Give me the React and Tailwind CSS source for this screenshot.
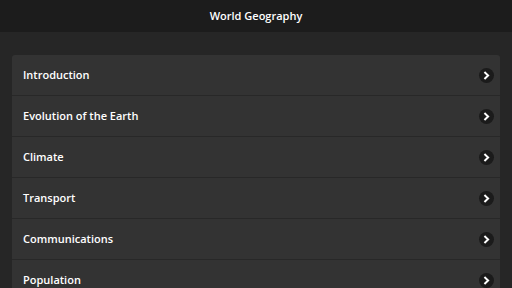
const topics = [
  "Introduction",
  "Evolution of the Earth",
  "Climate",
  "Transport",
  "Communications",
  "Population",
];

const Chevron = () => (
  <span className="flex h-[15px] w-[15px] items-center justify-center rounded-full bg-[#1b1b1b]">
    <svg width="9" height="9" viewBox="0 0 10 10">
      <path
        d="M3.5 1.8 L6.8 5 L3.5 8.2"
        fill="none"
        stroke="#ffffff"
        strokeWidth="2.2"
        strokeLinecap="square"
      />
    </svg>
  </span>
);

const App = () => {
  return (
    <div
      className="h-[288px] w-[512px] overflow-hidden bg-[#262626] text-white"
      style={{ fontFamily: '"Open Sans", "Noto Sans", sans-serif' }}
    >
      <header className="flex h-[32px] items-center justify-center bg-[#1c1c1c] text-[11px] font-semibold">
        World Geography
      </header>

      <div className="px-[12px] pt-[23px]">
        <ul className="overflow-hidden rounded-[3px] bg-[#333333]">
          {topics.map((topic, i) => (
            <li
              key={topic}
              className={`flex h-[41px] items-center justify-between pl-[11px] pr-[6px] ${
                i < topics.length - 1 ? "border-b border-[#282828]" : ""
              }`}
            >
              <span className="text-[11px] font-semibold">{topic}</span>
              <Chevron />
            </li>
          ))}
        </ul>
      </div>
    </div>
  );
};

export default App;
